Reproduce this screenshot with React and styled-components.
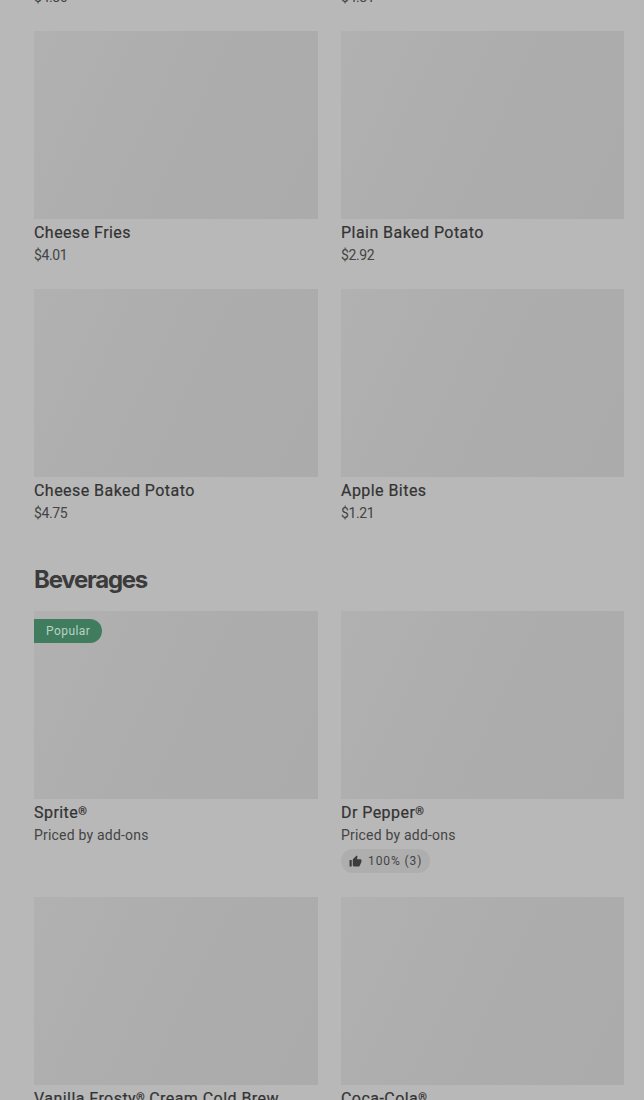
import React from 'react';
import styled, { createGlobalStyle } from 'styled-components';

const Global = createGlobalStyle`
  html, body { margin: 0; padding: 0; background: #b8b8b8; height: 1100px; overflow: hidden; }
  body { font-family: Roboto, "Liberation Sans", sans-serif; }
`;
const Page = styled.main`
  height: 1100px;
  overflow: hidden;
  background: #b8b8b8;
`;
const Scroller = styled.div`
  margin-top: -227px;
  padding: 0 20px 0 34px;
`;
const Grid = styled.div`
  display: grid;
  grid-template-columns: 284px 283px;
  column-gap: 23px;
  row-gap: 24px;
`;
const Heading = styled.h2`
  margin: 41px 0 15px;
  height: 32px;
  line-height: 32px;
  font-family: Inter, sans-serif;
  font-size: 24px;
  font-weight: 700;
  letter-spacing: -1.25px;
  color: #3b3b3b;
`;
const Card = styled.article`
  display: flex;
  flex-direction: column;
  min-width: 0;
`;
const Thumb = styled.div`
  position: relative;
  height: 188px;
  background: linear-gradient(115deg, #b1b1b1 0%, #adadad 45%, #ababab 100%);
`;
const Badge = styled.span`
  position: absolute;
  top: 8px;
  left: 0;
  height: 24px;
  line-height: 24px;
  padding: 0 12px;
  border-radius: 0 12px 12px 0;
  background: #3f7d5e;
  color: #b9d2c5;
  font-size: 12px;
  letter-spacing: 0.45px;
`;
const Name = styled.div`
  margin-top: 2px;
  height: 24px;
  line-height: 24px;
  font-size: 16px;
  font-weight: 400;
  letter-spacing: 0.45px;
  color: #333333;
  -webkit-text-stroke: 0.2px #333333;
  white-space: nowrap;
`;
const Mark = styled.span`
  font-size: 11px;
  vertical-align: 3px;
  letter-spacing: 0;
  line-height: 0;
`;
const Price = styled.div`
  height: 20px;
  line-height: 20px;
  font-size: 14px;
  letter-spacing: ${(p) => (p.$numeric ? '-0.4px' : '0.2px')};
  color: #444444;
`;
const Rating = styled.div`
  display: inline-flex;
  align-self: flex-start;
  align-items: center;
  gap: 6px;
  height: 24px;
  margin-top: 4px;
  padding: 0 8px;
  border-radius: 12px;
  background: #aeaeae;
  color: #444444;
  font-size: 12px;
  letter-spacing: 0.9px;
`;
const ThumbIcon = styled.svg`
  width: 13px;
  height: 13px;
  fill: #3c3c3c;
`;

const Item = ({ name, suffix, price, badge, rating }) => (
  <Card>
    <Thumb>{badge && <Badge>{badge}</Badge>}</Thumb>
    <Name>
      {name}
      {suffix !== undefined && <Mark>®</Mark>}
      {suffix}
    </Name>
    <Price $numeric={price.startsWith('$')}>{price}</Price>
    {rating && (
      <Rating>
        <ThumbIcon viewBox="0 0 24 24">
          <path d="M1 21h4V9H1v12zm22-11c0-1.100-.9-2-2-2h-6.310l.95-4.570.03-.320c0-.410-.170-.790-.440-1.060L14.170 1 7.590 7.590C7.220 7.950 7 8.450 7 9v10c0 1.100.9 2 2 2h9c.830 0 1.540-.500 1.840-1.220l3.020-7.050c.090-.230.140-.470.140-.730v-2z" />
        </ThumbIcon>
        {rating}
      </Rating>
    )}
  </Card>
);

const sides = [
  { name: 'Chili', price: '$4.86' },
  { name: 'Bacon Fries', price: '$4.81' },
  { name: 'Cheese Fries', price: '$4.01' },
  { name: 'Plain Baked Potato', price: '$2.92' },
  { name: 'Cheese Baked Potato', price: '$4.75' },
  { name: 'Apple Bites', price: '$1.21' },
];
const beverages = [
  { name: 'Sprite', suffix: '', price: 'Priced by add-ons', badge: 'Popular' },
  { name: 'Dr Pepper', suffix: '', price: 'Priced by add-ons', rating: '100% (3)' },
  { name: 'Vanilla Frosty', suffix: ' Cream Cold Brew', price: 'Priced by add-ons' },
  { name: 'Coca-Cola', suffix: '', price: 'Priced by add-ons' },
];

export default function App() {
  return (
    <Page>
      <Global />
      <Scroller>
        <Grid>{sides.map((i) => <Item key={i.name} {...i} />)}</Grid>
        <Heading>Beverages</Heading>
        <Grid>{beverages.map((i) => <Item key={i.name} {...i} />)}</Grid>
      </Scroller>
    </Page>
  );
}
